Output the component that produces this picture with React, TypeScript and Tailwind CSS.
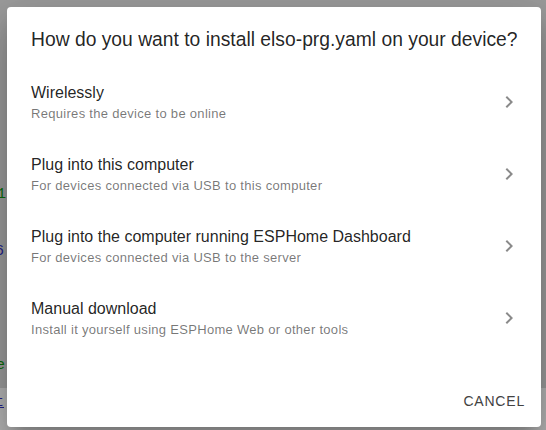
const options = [
  { title: "Wirelessly", sub: "Requires the device to be online" },
  { title: "Plug into this computer", sub: "For devices connected via USB to this computer" },
  { title: "Plug into the computer running ESPHome Dashboard", sub: "For devices connected via USB to the server" },
  { title: "Manual download", sub: "Install it yourself using ESPHome Web or other tools" },
];

function Chevron() {
  return (
    <svg viewBox="0 0 24 24" className="w-6 h-6 fill-[#8a8a8a]">
      <path d="M10 6L8.59 7.41 13.17 12l-4.58 4.59L10 18l6-6z" />
    </svg>
  );
}

export default function App() {
  return (
    <div
      className="relative w-[546px] h-[430px] overflow-hidden bg-[#9c9c9c]"
      style={{ fontFamily: "'Liberation Sans', Arial, sans-serif" }}
    >
      {/* page behind the scrim */}
      <div className="absolute inset-0 flex flex-col">
        <div className="h-[388px]" />
        <div className="flex-1 bg-[#b4b4b4]" />
      </div>
      <span className="absolute left-[-3px] top-[184px] text-[15px] text-[#0a6b0a] font-mono">1</span>
      <span className="absolute left-[-5px] top-[241px] text-[15px] text-[#23238a] font-mono">6</span>
      <span className="absolute left-[-4px] top-[355px] text-[15px] text-[#0a6b0a] font-mono">e</span>
      <span className="absolute left-[-5px] top-[392px] text-[15px] text-[#23238a] font-mono underline">t</span>

      {/* dialog */}
      <div className="absolute left-[7px] top-[7px] w-[534px] h-[420px] bg-white rounded-[4px] shadow-[0_11px_15px_-7px_rgba(0,0,0,0.2),0_24px_38px_3px_rgba(0,0,0,0.14),0_9px_46px_8px_rgba(0,0,0,0.12)] flex flex-col">
        <h2 className="px-6 pt-[19px] h-[59px] text-[19.3px] leading-[28px] text-[rgba(0,0,0,0.87)] whitespace-nowrap">
          How do you want to install elso-prg.yaml on your device?
        </h2>
        <ul className="flex flex-col">
          {options.map((o) => (
            <li key={o.title} className="h-[72px] flex items-center pl-6 pr-5">
              <div className="flex-1 flex flex-col pt-[2px]">
                <span className="text-[16px] leading-[20px] text-[rgba(0,0,0,0.87)]">
                  {o.title}
                </span>
                <span className="text-[13px] leading-[20px] tracking-[0.3px] text-[rgba(0,0,0,0.54)] mt-[1px]">
                  {o.sub}
                </span>
              </div>
              <Chevron />
            </li>
          ))}
        </ul>
        <div className="flex-1" />
        <div className="h-[52px] flex items-center justify-end pr-2">
          <button className="px-2 h-9 text-[14px] tracking-[0.8px] text-[#424242]">
            CANCEL
          </button>
        </div>
      </div>
    </div>
  );
}
